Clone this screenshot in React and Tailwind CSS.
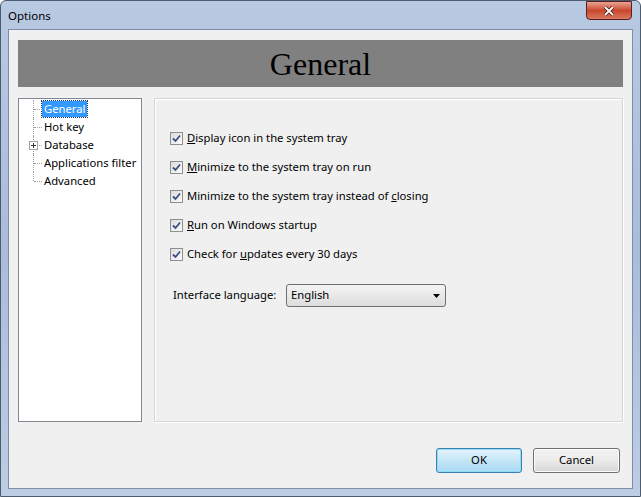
import React from "react";

const font = { fontFamily: '"Noto Sans", "Open Sans", sans-serif' };

function Check() {
  return (
    <span className="w-[13px] h-[13px] border border-[#8e8f8f] bg-gradient-to-br from-[#dcdcdc] to-[#fbfbfb] flex items-center justify-center shrink-0">
      <svg width="9" height="9" viewBox="0 0 9 9">
        <path d="M1 4.5 L3.5 7 L8 1.5" fill="none" stroke="#3b4f82" strokeWidth="1.8" />
      </svg>
    </span>
  );
}

function CheckRow({ children }) {
  return (
    <div className="flex items-center gap-[4px] h-[16px]">
      <Check />
      <span className="text-[11.25px] text-black leading-none whitespace-nowrap">{children}</span>
    </div>
  );
}

function TreeItem({ label, selected, plus, last }) {
  return (
    <div className="relative h-[18px] flex items-center">
      <div className="absolute left-[14px] top-0 w-0 border-l border-dotted border-[#a0a0a0]" style={{ height: last ? 9 : 18 }} />
      <div className="absolute left-[15px] top-[9px] w-[8px] border-t border-dotted border-[#a0a0a0]" />
      {plus && (
        <div className="absolute left-[10px] top-[5px] w-[9px] h-[9px] border border-[#a0a0a0] bg-white flex items-center justify-center">
          <svg width="5" height="5" viewBox="0 0 5 5"><path d="M0 2.5H5M2.5 0V5" stroke="#333" strokeWidth="1" /></svg>
        </div>
      )}
      <span
        className={
          "ml-[23px] px-[2px] text-[11.25px] leading-[16px] h-[16px] whitespace-nowrap " +
          (selected ? "bg-[#3399ff] text-white outline outline-1 outline-dotted outline-[#1a3a6a]" : "text-black")
        }
      >
        {label}
      </span>
    </div>
  );
}

export default function App() {
  return (
    <div className="w-[641px] h-[497px] flex flex-col bg-gradient-to-b from-[#b8c9e2] via-[#a9bcd9] to-[#bccde4] border border-[#4d5b6e] rounded-t-[6px] overflow-hidden" style={font}>
      <div className="h-[28px] flex items-start justify-between pl-[7px] pr-[8px]">
        <span className="text-[11.5px] text-black mt-[6px]">Options</span>
        <div className="w-[46px] h-[19px] mt-[0px] rounded-b-[4px] border border-[#5a1e1e] bg-gradient-to-b from-[#e8a493] via-[#c9462c] to-[#d87a5f] flex items-center justify-center">
          <svg width="12" height="10" viewBox="0 0 12 10">
            <path d="M2 1 L10 9 M10 1 L2 9" stroke="#3a1510" strokeWidth="3.2" />
            <path d="M2 1 L10 9 M10 1 L2 9" stroke="#ffffff" strokeWidth="1.8" />
          </svg>
        </div>
      </div>
      <div className="flex-1 mx-[7px] mb-[7px] border border-[#7d8ea5] bg-[#f0f0f0] flex flex-col pl-[9px] pr-[9px] pt-[10px]">
        <div className="h-[47px] bg-[#808080] flex items-center justify-center">
          <span className="text-[32px] text-black leading-none mt-[1px]" style={{ fontFamily: '"Liberation Serif", serif' }}>General</span>
        </div>
        <div className="flex gap-[12px] mt-[11px] h-[324px]">
          <div className="w-[124px] bg-white border border-[#828790] pt-[1px]">
            <TreeItem label="General" selected />
            <TreeItem label="Hot key" />
            <TreeItem label="Database" plus />
            <TreeItem label="Applications filter" />
            <TreeItem label="Advanced" last />
          </div>
          <div className="flex-1 border border-[#d5d5d5] shadow-[inset_1px_1px_0_#ffffff,1px_1px_0_#ffffff] pl-[15px] pt-[31px]">
            <div className="flex flex-col gap-[13px]">
              <CheckRow><u>D</u>isplay icon in the system tray</CheckRow>
              <CheckRow><u>M</u>inimize to the system tray on run</CheckRow>
              <CheckRow>Minimize to the system tray instead of <u>c</u>losing</CheckRow>
              <CheckRow><u>R</u>un on Windows startup</CheckRow>
              <CheckRow>Check for <u>u</u>pdates every 30 days</CheckRow>
            </div>
            <div className="flex items-center mt-[22px]">
              <span className="text-[11.25px] text-black ml-[3px] w-[113px]">Interface language:</span>
              <div className="w-[160px] h-[23px] rounded-[3px] border border-[#707070] bg-gradient-to-b from-[#f4f4f4] to-[#dddddd] flex items-center justify-between pl-[4px] pr-[5px]">
                <span className="text-[11.25px] text-black">English</span>
                <svg width="7" height="4" viewBox="0 0 7 4"><path d="M0 0H7L3.5 4Z" fill="#000" /></svg>
              </div>
            </div>
          </div>
        </div>
        <div className="flex justify-end gap-[11px] mt-[26px] pr-[3px]">
          <button className="w-[86px] h-[25px] rounded-[3px] border border-[#3c7fb1] bg-gradient-to-b from-[#e5f4fc] via-[#c4e5f6] to-[#a9daf4] shadow-[inset_0_0_0_1px_#8fdcf7] text-[11.25px] text-black">OK</button>
          <button className="w-[87px] h-[25px] rounded-[3px] border border-[#707070] bg-gradient-to-b from-[#f2f2f2] via-[#ebebeb] to-[#d6d6d6] shadow-[inset_0_0_0_1px_#fcfcfc] text-[11.25px] text-black">Cancel</button>
        </div>
      </div>
    </div>
  );
}
